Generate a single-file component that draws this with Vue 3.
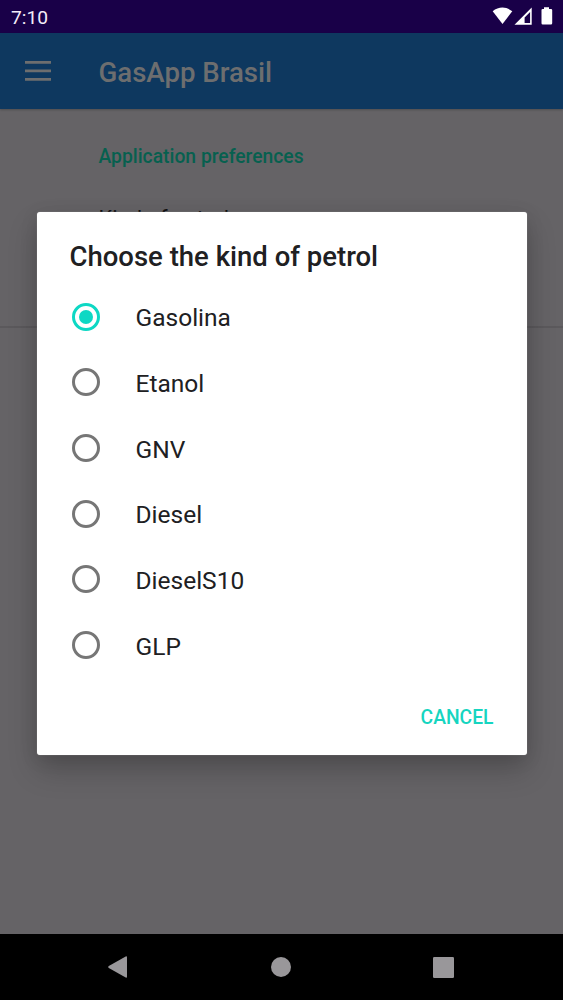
<script setup>
import { ref } from 'vue'
const options = ['Gasolina', 'Etanol', 'GNV', 'Diesel', 'DieselS10', 'GLP']
const selected = ref('Gasolina')
</script>

<template>
  <div class="screen">
    <div class="status">
      <span class="clock">7:10</span>
      <svg class="indicators" width="62" height="20" viewBox="0 0 62 20">
        <path d="M.7 4.3C6.5-.7 14.5-.7 20.3 4.3L10.5 17Z" />
        <path fill-rule="evenodd" d="M39.7.6V17.7H22.5ZM38.1 5 32.6 10.5V16.1H38.1Z" />
        <path d="M52 .3h5v1.6h2q1.2 0 1.2 1.2v13.2q0 1.2-1.2 1.2h-8.3q-1.2 0-1.2-1.2V3.1q0-1.2 1.2-1.2H52Z" />
      </svg>
    </div>
    <header class="toolbar">
      <svg class="menu" width="26" height="20" viewBox="0 0 26 20">
        <path d="M0 1.4H26M0 9.9H26M0 18.3H26" />
      </svg>
      <h1>GasApp Brasil</h1>
    </header>
    <main class="content">
      <section class="prefs">
        <h2>Application preferences</h2>
        <p class="pref-name">Kind of petrol</p>
      </section>
    </main>
    <nav class="navbar">
      <svg width="20" height="22" viewBox="0 0 20 22"><path d="M.8 10.1 17.7.4Q19 0 19 1.2V20.8Q19 22 17.7 21.5L.8 11.9Q-.4 11 .8 10.1Z" /></svg>
      <svg width="20" height="20" viewBox="0 0 20 20"><circle cx="10" cy="10" r="10" /></svg>
      <svg width="21" height="21" viewBox="0 0 21 21"><rect width="21" height="21" rx="1.3" /></svg>
    </nav>
    <div class="dialog" role="dialog">
      <h3>Choose the kind of petrol</h3>
      <ul>
        <li v-for="o in options" :key="o" @click="selected = o">
          <span class="radio" :class="{ on: o === selected }"></span>
          <span class="label">{{ o }}</span>
        </li>
      </ul>
      <div class="actions"><button>CANCEL</button></div>
    </div>
  </div>
</template>

<style>
body { margin: 0; background: #656366; }
</style>
<style scoped>
.screen { position: relative; width: 563px; height: 1000px; display: flex; flex-direction: column; overflow: hidden; background: #656366; font-family: Roboto, sans-serif; }
h1, h2, h3, p, ul { margin: 0; padding: 0; }
.status { height: 33px; flex: none; display: flex; justify-content: space-between; align-items: flex-start; background: #190048; padding: 0 9px 0 11px; box-sizing: border-box; }
.clock { color: #f4edf8; font-size: 19.2px; line-height: 35px; }
.indicators { margin-top: 7px; fill: #fff; }
.toolbar { height: 76px; flex: none; display: flex; align-items: center; padding-left: 25px; background: #0e385f; box-shadow: 0 1px 2px rgba(0, 0, 0, .22); }
.menu { fill: none; stroke: #6d6e6f; stroke-width: 2.7; }
h1 { margin-left: 47.5px; font-size: 27.6px; line-height: 32px; font-weight: 500; color: #6d6e6f; padding-top: 3px; }
.content { flex: 1; }
.prefs { height: 181px; border-bottom: 2px solid #5b595c; padding: 36px 0 0 98.5px; }
h2 { font-size: 19.3px; line-height: 24px; font-weight: 500; color: #07604f; }
.pref-name { font-size: 21.9px; line-height: 26px; color: #111012; margin-top: 37px; }
.navbar { height: 66px; flex: none; display: grid; grid-template-columns: 20px 20px 21px; column-gap: 143px; justify-content: start; align-items: center; padding-left: 108px; background: #000; fill: #99979a; }
.navbar svg:last-child { margin-left: -1px; }
.dialog { position: absolute; left: 36.5px; top: 212px; width: 490px; height: 543px; display: flex; flex-direction: column; box-sizing: border-box; background: #fff; border-radius: 3px; box-shadow: 0 0 1px #aaa, 0 15px 30px rgba(0, 0, 0, .2), 0 4px 18px rgba(0, 0, 0, .1); }
h3 { font-size: 27.5px; line-height: 32px; font-weight: 500; color: #202022; margin: 29px 0 0 33px; }
ul { list-style: none; margin-top: 11px; }
li { height: 65.67px; display: flex; align-items: center; padding-left: 35.5px; }
.radio { width: 28px; height: 28px; box-sizing: border-box; border: 3px solid #767676; border-radius: 50%; display: grid; place-items: center; }
.radio.on { border-color: #0dd8c4; }
.radio.on::after { content: ''; width: 14px; height: 14px; border-radius: 50%; background: #0dd8c4; }
.label { margin-left: 35.5px; font-size: 24.5px; line-height: 30px; color: #202022; padding-top: 3px; }
.actions { display: flex; justify-content: flex-end; padding: 26px 33px 0 0; }
button { border: 0; background: none; padding: 0; font: 500 19.3px/28px Roboto, sans-serif; color: #16d5c0; }
</style>
